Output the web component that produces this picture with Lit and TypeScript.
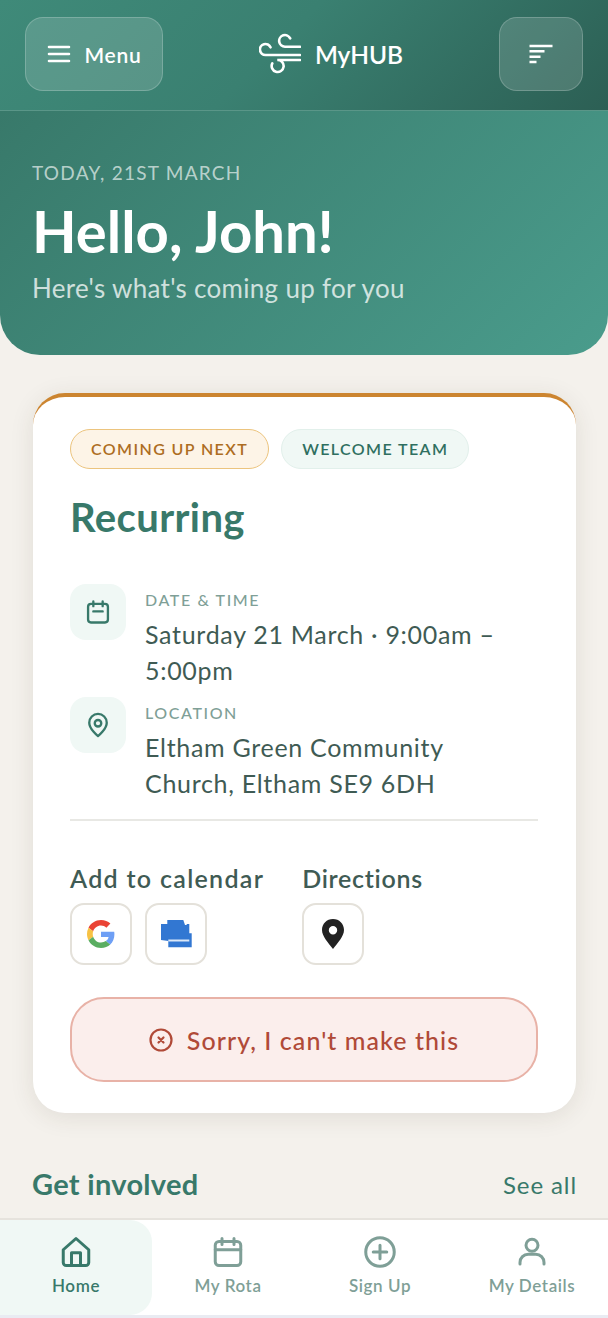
import { LitElement, html, css, svg } from "lit";
import { customElement } from "lit/decorators.js";

const icon = (size: number, body: unknown, sw = 2, vb = 24) => html`<svg width=${size} height=${size} viewBox="0 0 ${vb} ${vb}" fill="none" stroke="currentColor" stroke-width=${sw} stroke-linecap="round" stroke-linejoin="round">${body}</svg>`;

const calendar = svg`<rect x="3.5" y="5" width="17" height="16" rx="2.5"/><path d="M8 3v4M16 3v4M3.5 10.5h17"/>`;
const calendarSmall = svg`<rect x="3.5" y="5" width="17" height="16" rx="2.5"/><path d="M8 3v4M16 3v4M8 11.5h8"/>`;

@customElement("app-root")
export class AppRoot extends LitElement {
  static styles = css`
    :host { display: block; width: 608px; height: 1318px; background: #f4f1ec; font-family: "Lato", "Noto Sans", sans-serif; overflow: hidden; }
    .page { display: flex; flex-direction: column; height: 1318px; }
    main { flex: 1; min-height: 0; overflow: hidden; }
    header { height: 111px; box-sizing: border-box; display: flex; align-items: center; justify-content: space-between; padding: 0 25px 2px; border-bottom: 1.5px solid #5a9688;
      background: linear-gradient(135deg, #3f8a79 0%, #3a8071 45%, #2c5f54 100%); color: #fff; }
    .hbtn { height: 74px; box-sizing: border-box; border-radius: 18px; border: 1.5px solid rgba(255,255,255,.2); background: rgba(255,255,255,.15); display: flex; align-items: center; justify-content: center; color: #fff; }
    .menu { width: 138px; gap: 14px; font-size: 21px; font-weight: 600; letter-spacing: .7px; }
    .filter { width: 84px; }
    .brand { display: flex; align-items: center; gap: 14px; font-size: 24.5px; font-weight: 600; }
    .hero { height: 244px; box-sizing: border-box; padding: 49px 32px 0; border-radius: 0 0 40px 40px; color: #fff; background: linear-gradient(135deg, #38796a 0%, #4a9c8c 100%); }
    .date { font-size: 19px; line-height: 26px; letter-spacing: 1.25px; color: rgba(255,255,255,.65); }
    h1 { margin: 12px 0 0; font-size: 58px; line-height: 66px; font-weight: 700; }
    .sub { font-size: 26px; line-height: 32px; color: rgba(255,255,255,.75); letter-spacing: .3px; margin-top: 8px; }
    .card { margin: 38px 32px 0 33px; height: 720px; box-sizing: border-box; background: #fff; border-radius: 32px; border-top: 4px solid #cc8530; padding: 32px 38px 0 37px; box-shadow: 0 4px 24px rgba(60,50,30,.1); }
    .pills { display: flex; gap: 12px; }
    .pill { height: 40px; box-sizing: border-box; border-radius: 20px; padding: 0 20px 2px; display: flex; align-items: center; font-size: 16px; font-weight: 600; letter-spacing: 1.4px; }
    .amber { background: #fdf4e7; border: 1.5px solid #ecc47e; color: #ad6d22; }
    .teal { background: #f0f8f5; border: 1.5px solid #e2f0eb; color: #2f6f60; }
    h2 { margin: 25px 0 0; font-size: 40px; line-height: 46px; font-weight: 700; color: #38796a; letter-spacing: .4px; }
    .row { display: flex; gap: 19px; }
    .row.first { margin-top: 44px; }
    .row.second { margin-top: 9px; }
    .ibox { width: 56px; height: 56px; flex: none; border-radius: 16px; background: #f0f8f5; color: #38796a; display: flex; align-items: center; justify-content: center; }
    .lbl { font-size: 16px; line-height: 32px; height: 32px; font-weight: 500; letter-spacing: 1.6px; color: #7f9f97; }
    .val { font-size: 25px; line-height: 36px; color: #3f5b54; letter-spacing: .7px; }
    hr { margin: 18px 0 0; border: 0; border-top: 2px solid #e8e8e4; }
    .actions { display: flex; gap: 38px; margin-top: 41px; }
    .atitle { font-size: 25px; line-height: 32px; font-weight: 600; color: #3f5b54; letter-spacing: 1.3px; min-width: 194px; }
    .dir .atitle { min-width: 0; letter-spacing: .7px; }
    .btns { display: flex; gap: 13px; margin-top: 9px; }
    .sq { width: 62px; height: 62px; box-sizing: border-box; border: 2px solid #e4e1da; border-radius: 14px; background: #fff; display: flex; align-items: center; justify-content: center; }
    .cancel { margin-top: 32px; height: 85px; box-sizing: border-box; border-radius: 34px; border: 2.5px solid #e8b2a7; background: #fbeeec; color: #b04a38; display: flex; align-items: center; justify-content: center; gap: 14px; font-size: 25px; font-weight: 500; letter-spacing: 1.05px; }
    .section { display: flex; justify-content: space-between; align-items: center; margin: 52px 31px 0 32px; }
    .section b { font-size: 29px; line-height: 38px; font-weight: 700; color: #38796a; letter-spacing: .3px; }
    .section span { font-size: 24px; color: #38796a; letter-spacing: .9px; }
    nav { flex: none; height: 100px; box-sizing: border-box; display: grid; grid-template-columns: repeat(4, 1fr); background: #fff; border-top: 2px solid #e6e3dd; border-bottom: 3px solid #e9ebf2; }
    .tab { display: flex; flex-direction: column; align-items: center; justify-content: flex-start; padding-top: 14px; gap: 5px; color: #7f9f97; font-size: 17px; font-weight: 600; letter-spacing: .6px; line-height: 22px; }
    .tab.on { background: #f0f8f5; color: #38796a; border-radius: 0 22px 22px 0; }
  `;

  render() {
    return html`<div class="page">
      <main>
        <header>
          <div class="hbtn menu">
            <svg width="24" height="18" viewBox="0 0 24 18" fill="none" stroke="#fff" stroke-width="2.6" stroke-linecap="round"><path d="M2 2h20M2 9h20M2 16h20"/></svg>
            <span>Menu</span>
          </div>
          <div class="brand">
            <svg width="42" height="42" viewBox="0 0 42 42" fill="none" stroke="#fff" stroke-width="2.6" stroke-linecap="round">
              <path d="M41 13.700H26a5.800 5.800 0 1 1 5.200-8.300"/>
              <path d="M41 22H6.500a5.500 5.500 0 1 1 5-7.700"/>
              <path d="M41 27H18.300a6 6 0 1 1-5 3.300"/>
            </svg>
            <span>MyHUB</span>
          </div>
          <div class="hbtn filter">
            <svg width="24" height="20" viewBox="0 0 24 20" fill="none" stroke="#fff" stroke-width="2.4"><path d="M0.500 2h23M0.500 7.300h15M0.500 12.700h11M0.500 18h7"/></svg>
          </div>
        </header>
        <section class="hero">
          <div class="date">TODAY, 21ST MARCH</div>
          <h1>Hello, John!</h1>
          <div class="sub">Here's what's coming up for you</div>
        </section>
        <section class="card">
          <div class="pills">
            <div class="pill amber">COMING UP NEXT</div>
            <div class="pill teal">WELCOME TEAM</div>
          </div>
          <h2>Recurring</h2>
          <div class="row first">
            <div class="ibox">${icon(28, calendarSmall)}</div>
            <div>
              <div class="lbl">DATE &amp; TIME</div>
              <div class="val">Saturday 21 March · 9:00am –<br />5:00pm</div>
            </div>
          </div>
          <div class="row second">
            <div class="ibox">${icon(28, svg`<path d="M12 21.500s7.500-6 7.500-11.500a7.500 7.500 0 0 0-15 0c0 5.500 7.500 11.500 7.500 11.500z"/><circle cx="12" cy="10.500" r="2.800"/>`)}</div>
            <div>
              <div class="lbl">LOCATION</div>
              <div class="val">Eltham Green Community<br />Church, Eltham SE9 6DH</div>
            </div>
          </div>
          <hr />
          <div class="actions">
            <div>
              <div class="atitle">Add to calendar</div>
              <div class="btns">
                <div class="sq">
                  <svg width="28" height="28" viewBox="0 0 48 48">
                    <path fill="#EA4335" d="M24 9.500c3.500 0 6.700 1.200 9.200 3.600l6.900-6.900C35.900 2.400 30.500 0 24 0 14.600 0 6.500 5.400 2.600 13.200l8 6.200C12.400 13.700 17.700 9.500 24 9.500z"/>
                    <path fill="#6E9FF5" d="M47 24.500c0-1.600-.1-3.100-.4-4.500H24v9h13c-.6 3-2.300 5.500-4.800 7.200l7.700 6C44.400 37.600 47 31.600 47 24.500z"/>
                    <path fill="#F7C244" d="M10.600 28.600A14.500 14.500 0 0 1 9.800 24c0-1.600.3-3.200.8-4.600l-8-6.200A24 24 0 0 0 0 24c0 3.900.9 7.500 2.600 10.800l8-6.200z"/>
                    <path fill="#5BAE62" d="M24 48c6.500 0 11.900-2.100 15.900-5.800l-7.700-6c-2.200 1.500-5 2.300-8.200 2.300-6.300 0-11.600-4.200-13.400-10l-8 6.200C6.500 42.600 14.600 48 24 48z"/>
                  </svg>
                </div>
                <div class="sq">
                  <svg width="31" height="28" viewBox="0 0 31 28">
                    <path fill="#3277d2" d="M0 4h6.300V0h16L24 5h1.700V4h2.600v9.300h2.400v14H7.300V21L0 20z"/>
                    <path fill="#dbe8f8" d="M7.300 19.500h21v2H7.300z"/>
                  </svg>
                </div>
              </div>
            </div>
            <div class="dir">
              <div class="atitle">Directions</div>
              <div class="btns">
                <div class="sq">
                  <svg width="24" height="32" viewBox="0 0 24 32"><path fill="#222" fill-rule="evenodd" d="M12 1C5.700 1 1 5.800 1 12c0 6.500 6.500 13 11 19 4.500-6 11-12.500 11-19C23 5.800 18.300 1 12 1zm0 7a4.200 4.200 0 1 1 0 8.400A4.200 4.200 0 0 1 12 8z"/></svg>
                </div>
              </div>
            </div>
          </div>
          <div class="cancel">
            ${icon(24, svg`<circle cx="12" cy="12" r="10.500"/><path d="M9.500 9.500l5 5M14.500 9.500l-5 5"/>`, 2.2)}
            <span>Sorry, I can't make this</span>
          </div>
        </section>
        <div class="section"><b>Get involved</b><span>See all</span></div>
      </main>
      <nav>
        <div class="tab on">
          ${icon(36, svg`<path d="M3.500 10.500L12 3l8.500 7.500V19a2 2 0 0 1-2 2h-13a2 2 0 0 1-2-2z"/><path d="M9 21v-8.500h6V21"/>`)}
          <span>Home</span>
        </div>
        <div class="tab">${icon(36, calendar)}<span>My Rota</span></div>
        <div class="tab">
          ${icon(36, svg`<circle cx="12" cy="12" r="9.500"/><path d="M12 7.500v9M7.500 12h9"/>`)}
          <span>Sign Up</span>
        </div>
        <div class="tab">
          ${icon(36, svg`<circle cx="12" cy="7.500" r="4"/><path d="M4 20v-1a5.500 5.500 0 0 1 5.500-5.500h5A5.500 5.500 0 0 1 20 19v1"/>`)}
          <span>My Details</span>
        </div>
      </nav>
    </div>`;
  }
}
